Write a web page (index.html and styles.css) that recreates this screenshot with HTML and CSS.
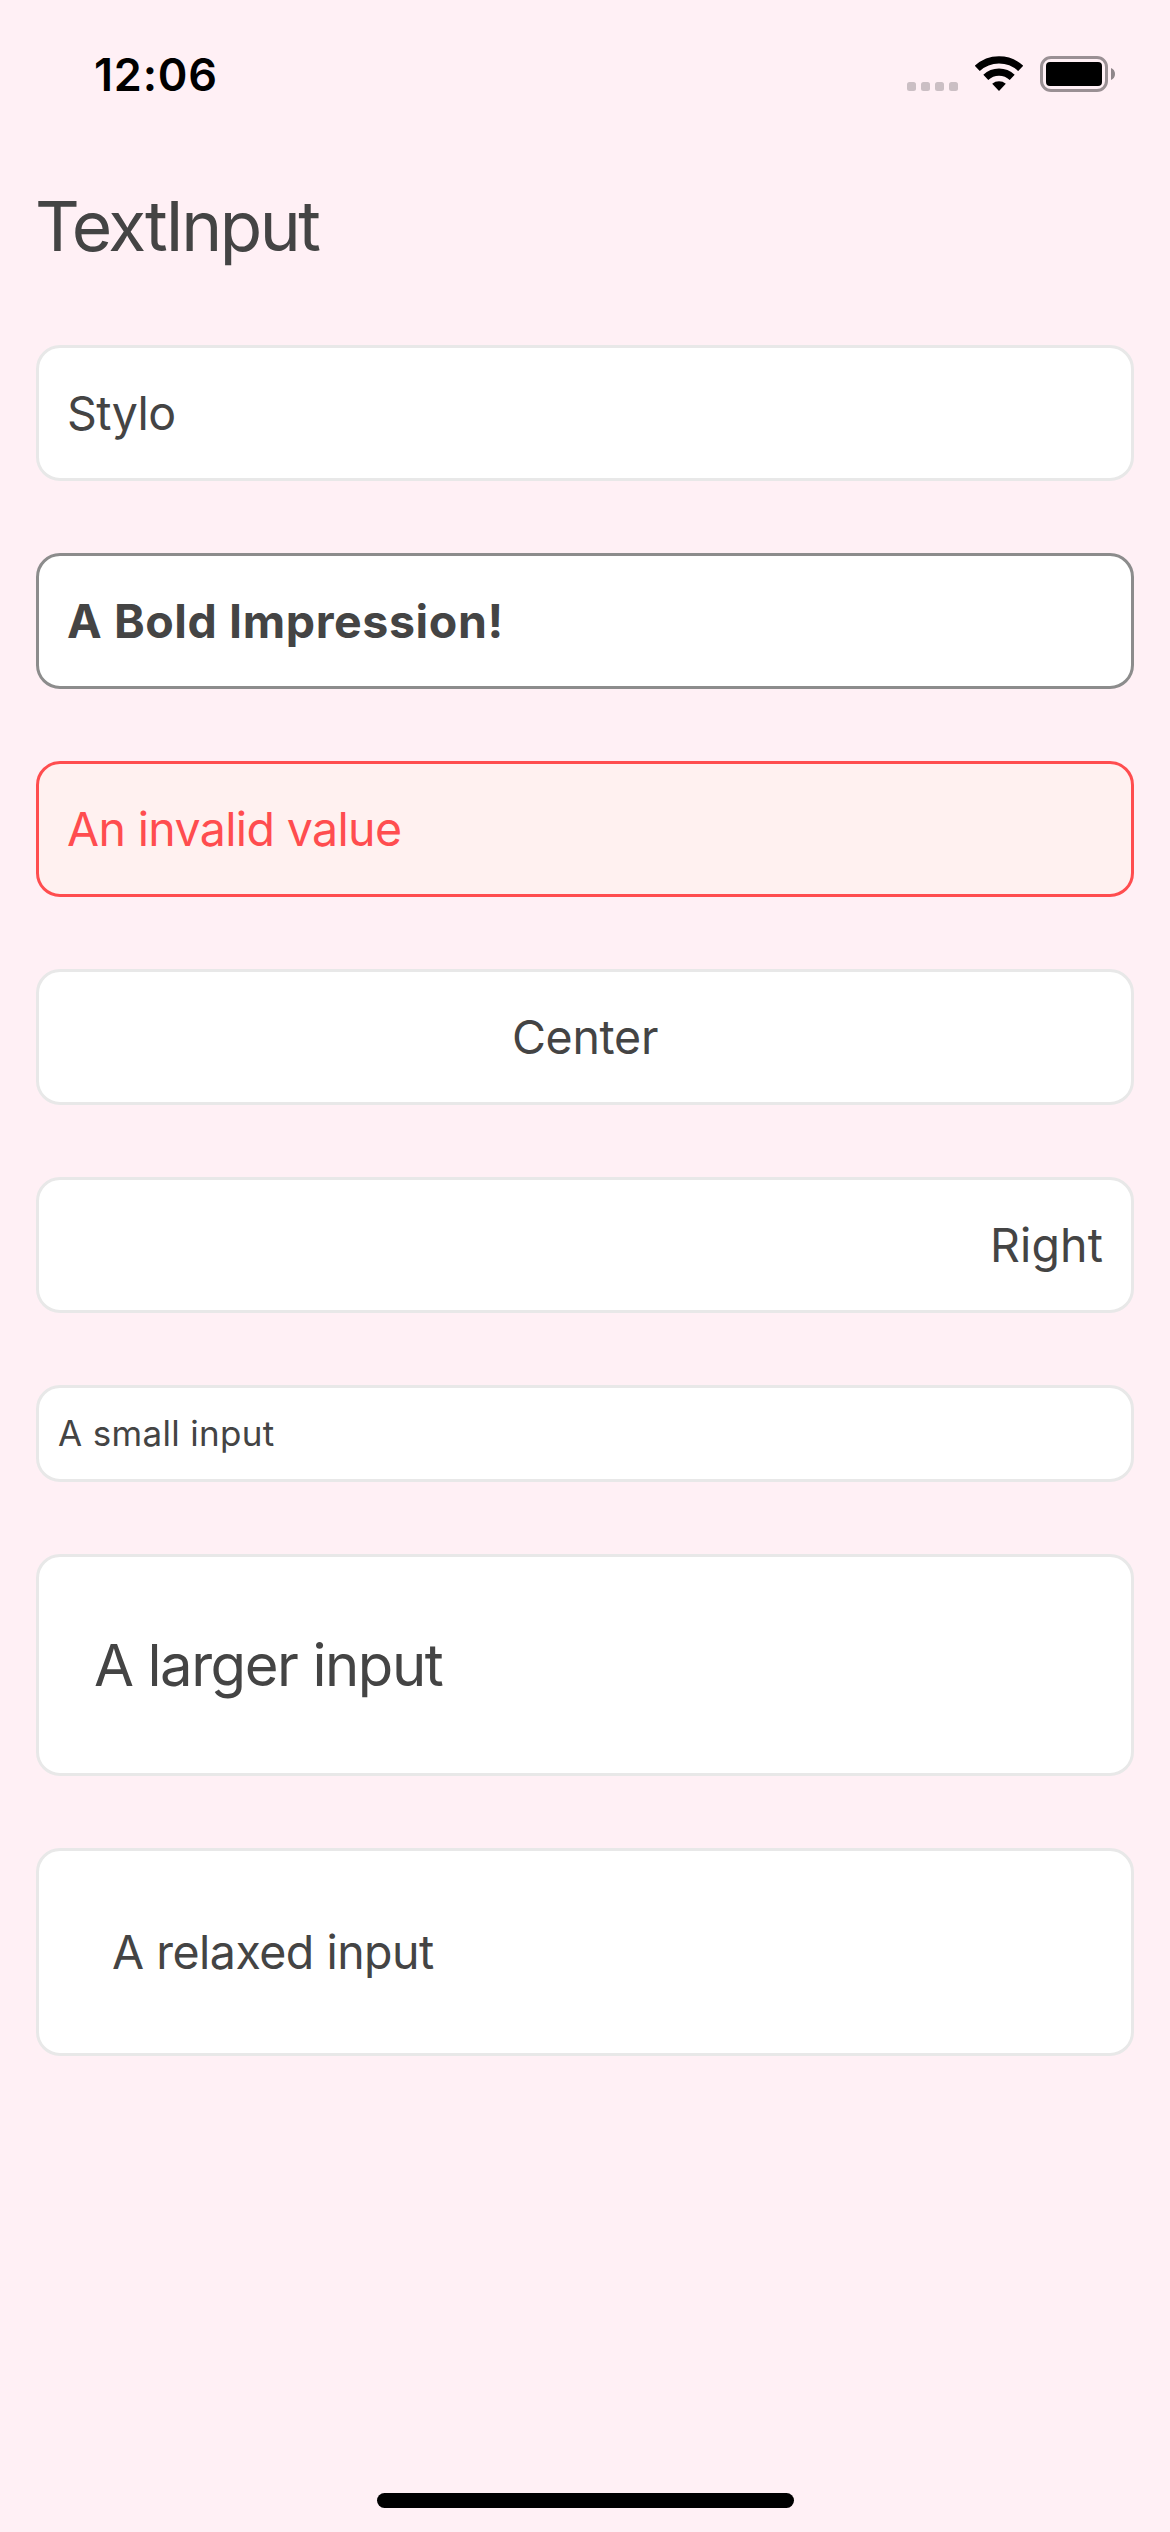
FILE: index.html
```
<!DOCTYPE html>
<html lang="en">
<head>
<meta charset="utf-8">
<title>TextInput</title>
<link rel="stylesheet" href="styles.css">
</head>
<body>
<div class="screen">
  <header class="status-bar">
    <span class="clock">12:06</span>
    <div class="indicators">
      <svg class="signal" viewBox="0 0 51 9" width="51" height="9">
        <rect x="0" width="9" height="9" rx="2.5"/>
        <rect x="14" width="9" height="9" rx="2.5"/>
        <rect x="28" width="9" height="9" rx="2.5"/>
        <rect x="42" width="9" height="9" rx="2.5"/>
      </svg>
      <svg class="wifi" viewBox="0 0 48 36" width="48" height="36">
        <path class="wifi-arc" d="M2.3 13.4A31.8 31.8 0 0 1 45.7 13.4"/>
        <path class="wifi-arc" d="M10.8 22.4A19.2 19.2 0 0 1 37.2 22.4"/>
        <path d="M17.2 28.7A10.6 10.6 0 0 1 30.8 28.7L24 36Z"/>
      </svg>
      <svg class="battery" viewBox="0 0 76 36" width="76" height="36">
        <rect class="battery-shell" x="1.5" y="1.5" width="65" height="33" rx="9.5"/>
        <rect x="6" y="6" width="56" height="24" rx="4"/>
        <path class="battery-tip" d="M71 12C73.5 13 75 15.3 75 18C75 20.7 73.5 23 71 24Z"/>
      </svg>
    </div>
  </header>
  <main class="content">
    <h1 class="title">TextInput</h1>
    <div class="fields">
      <div class="field">Stylo</div>
      <div class="field field-bold">A Bold Impression!</div>
      <div class="field field-invalid">An invalid value</div>
      <div class="field field-center">Center</div>
      <div class="field field-right">Right</div>
      <div class="field field-small">A small input</div>
      <div class="field field-large">A larger input</div>
      <div class="field field-relaxed">A relaxed input</div>
    </div>
  </main>
  <div class="home-indicator"></div>
</div>
</body>
</html>
```
FILE: styles.css
```
* { box-sizing: border-box; }

body {
  margin: 0;
  background: #fff0f5;
  color: #444;
  font-family: Inter, "Liberation Sans", sans-serif;
}

.screen {
  display: flex;
  flex-direction: column;
  height: 2532px;
}

.status-bar {
  display: flex;
  justify-content: space-between;
  align-items: flex-start;
  height: 141px;
  padding: 55px 54px 0 94px;
  color: #000;
}

.clock {
  font-size: 45px;
  font-weight: 600;
  line-height: 40px;
  letter-spacing: 0.8px;
}

.indicators {
  display: flex;
  align-items: flex-end;
  gap: 17px;
}

.signal { fill: #cbbfc4; }
.wifi-arc { fill: none; stroke: #000; stroke-width: 7.2; }
.battery { margin-bottom: -1px; }
.battery-shell { fill: none; stroke: #9a9094; stroke-width: 3; }
.battery-tip { fill: #8f868a; }

.content {
  flex: 1;
  padding: 33px 36px 0;
}

.title {
  margin: 0 0 67px -1px;
  font-size: 69.4px;
  font-weight: 400;
  line-height: 104px;
  letter-spacing: -2.5px;
}

.fields {
  display: flex;
  flex-direction: column;
  gap: 72px;
}

.field {
  padding: 0 28px;
  border: 3px solid #e8e8e8;
  border-radius: 24px;
  background: #fff;
  font-size: 46.5px;
  line-height: 130px;
  letter-spacing: -0.57px;
}

.field-bold {
  border-color: #8c8c8c;
  font-weight: 700;
  letter-spacing: 0.59px;
}

.field-invalid {
  border-color: #ff4d4f;
  background: #fff1f0;
  color: #ff4d4f;
  letter-spacing: -0.64px;
}

.field-center {
  text-align: center;
  letter-spacing: -0.28px;
}

.field-right {
  text-align: right;
  letter-spacing: 0.12px;
}

.field-small {
  padding: 0 19px;
  font-size: 35px;
  line-height: 91px;
  letter-spacing: 0.32px;
}

.field-large {
  padding: 0 55px;
  font-size: 58px;
  line-height: 216px;
  letter-spacing: -1.44px;
}

.field-relaxed {
  padding: 0 73px;
  line-height: 202px;
  letter-spacing: -0.5px;
}

.home-indicator {
  align-self: center;
  width: 417px;
  height: 15px;
  margin-bottom: 24px;
  border-radius: 8px;
  background: #000;
}
```
